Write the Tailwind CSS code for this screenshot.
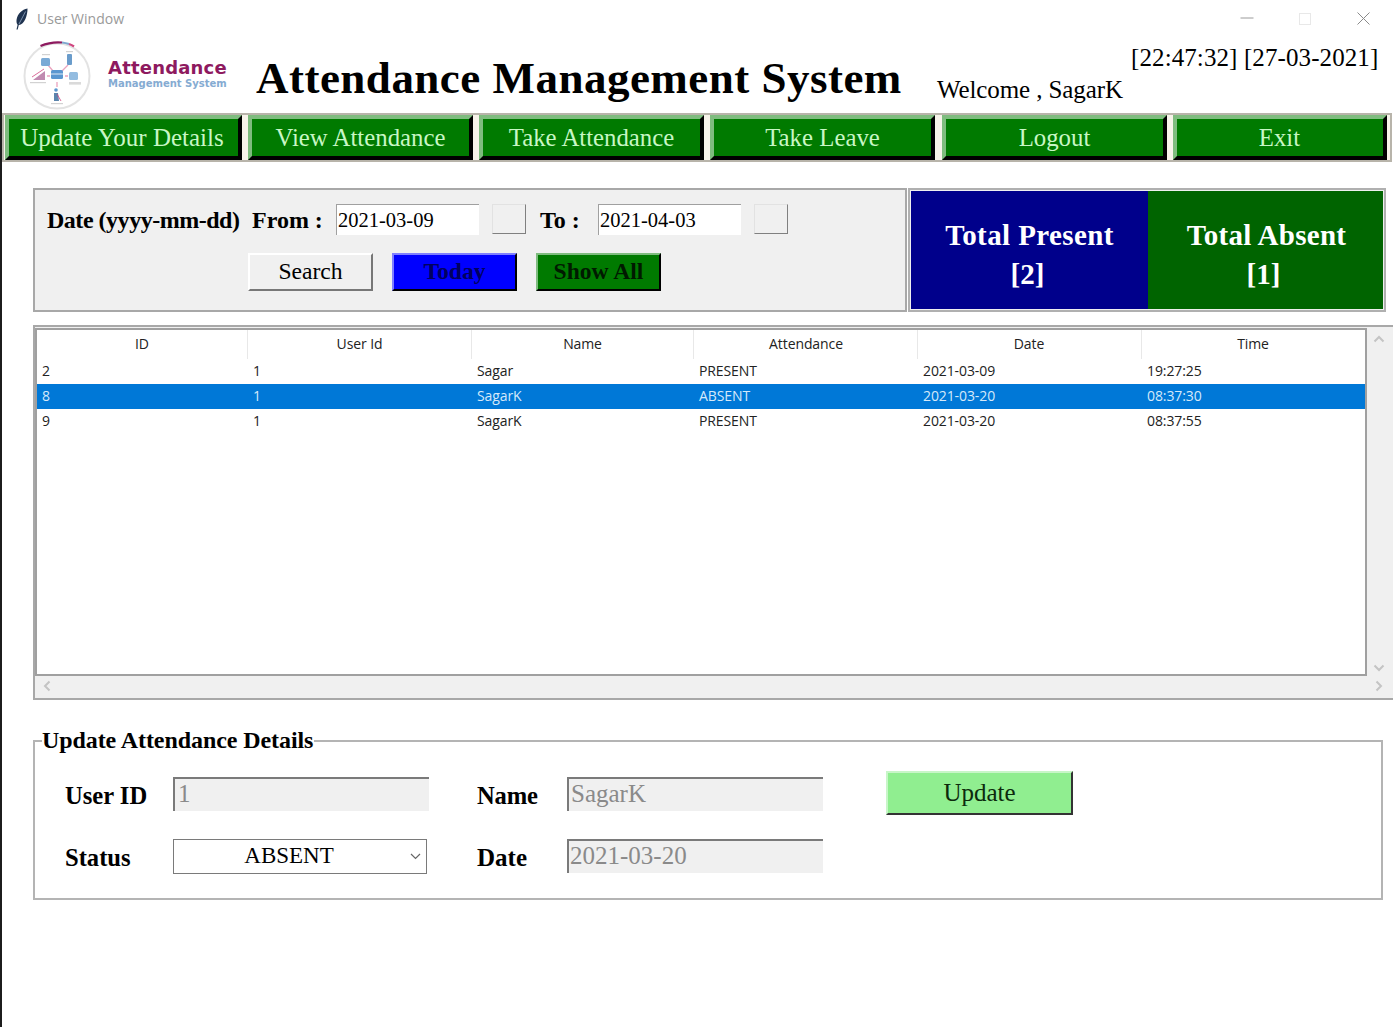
<!DOCTYPE html>
<html>
<head>
<meta charset="utf-8">
<script src="https://cdn.jsdelivr.net/npm/@tailwindcss/browser@4"></script>
<title>User Window</title>
</head>
<body class="bg-white">
<div class="w-[1393px] h-[1027px] overflow-hidden bg-white border-l-2 border-[#1c1c1c] font-['Liberation_Serif',serif] text-black">

  <!-- Title bar -->
  <div class="h-[38px] flex items-center pl-[13px] pb-[1px] font-['Open_Sans',sans-serif] text-[14px] text-[#9a9a9a]">
    <svg class="w-[14px] h-[22px] mr-[8px]" viewBox="0 0 14 22"><path d="M12.5 0.5C7 1.5 2.5 6 1.6 11.5C1.3 13.6 1.6 15.6 2.6 16.8L1.5 21.5L2.7 21.6L3.8 17C6.5 16.8 9 14.4 10.4 11C11.8 7.6 12.6 3.8 12.5 0.5Z" fill="#1f3350"/><path d="M10.5 3.5L4 16" stroke="#8fa4c0" stroke-width="0.8" fill="none"/></svg>
    <span>User Window</span>
    <div class="ml-auto flex items-center">
      <svg class="w-[14px] h-[14px] mr-[45px] -mt-[1px]" viewBox="0 0 14 14"><path d="M0.5 7H13.5" stroke="#9a9a9a" stroke-width="1"/></svg>
      <svg class="w-[12px] h-[12px] mr-[46px]" viewBox="0 0 12 12"><rect x="0.5" y="0.5" width="11" height="11" fill="none" stroke="#e8e8e8"/></svg>
      <svg class="w-[13px] h-[13px] mr-[23px]" viewBox="0 0 13 13"><path d="M0.5 0.5L12.5 12.5M12.5 0.5L0.5 12.5" stroke="#8a8a8a" stroke-width="1"/></svg>
    </div>
  </div>

  <!-- Header -->
  <div class="h-[75px] flex">
    <svg class="w-[72px] h-[72px] ml-[19px] mt-[1px] shrink-0" viewBox="0 0 72 72">
      <circle cx="36" cy="37" r="32.5" fill="#fff" stroke="#e3e3e3" stroke-width="2"/>
      <path d="M19.5 7Q30 2.5 41 3.5" stroke="#8e1a5f" stroke-width="2.2" fill="none"/>
      <path d="M41 3.5Q45 4 48 5" stroke="#7fa8d0" stroke-width="2.2" fill="none"/>
      <path d="M48 5Q51 6 53 7.5" stroke="#d0457f" stroke-width="2.2" fill="none"/>
      <path d="M27 26L32 32M47 26L41 32M26 37H29M44 37H47M36 43V48" stroke="#eaa3be" stroke-width="1.3"/>
      <rect x="20" y="19" width="9" height="8" rx="1.5" fill="#7aaad6"/>
      <rect x="46" y="15" width="5" height="11" rx="1" fill="#6a9ccb"/>
      <rect x="30" y="31" width="12" height="9" rx="1.5" fill="#5a97d0"/>
      <path d="M30 35H42" stroke="#fff" stroke-width="0.8"/>
      <rect x="48" y="33" width="9" height="8" rx="1.5" fill="#93bce0"/>
      <path d="M12 41L24 32L24 41Z" fill="#c08ab0"/>
      <path d="M11 38L23 30" stroke="#d0457f" stroke-width="0.8"/>
      <circle cx="35" cy="51" r="1.8" fill="#5a97d0"/>
      <path d="M33 54H37L38 62H33Z" fill="#5a84ac"/>
      <path d="M36 55L40 62" stroke="#d0457f" stroke-width="0.8"/>
      <rect x="21" y="15" width="8" height="1.2" fill="#d2d2d2"/>
      <rect x="45" y="12" width="7" height="1.2" fill="#d2d2d2"/>
      <rect x="9" y="43" width="16" height="1.2" fill="#d2d2d2"/>
      <rect x="48" y="43" width="12" height="2.6" fill="#dadada"/>
      <rect x="30" y="64" width="12" height="1.2" fill="#d2d2d2"/>
    </svg>
    <div class="w-[125px] ml-[15px] shrink-0 pt-[20px] font-['DejaVu_Sans',sans-serif] font-bold">
      <div class="text-[18px] leading-[20px] tracking-[0.2px] text-[#8e1a5f]">Attendance</div>
      <div class="text-[10px] leading-[12px] text-[#85abd2]">Management System</div>
    </div>
    <div class="w-[676px] ml-[23px] shrink-0 pt-[10px] text-[45px] leading-[60px] tracking-[0.48px] font-bold whitespace-nowrap">Attendance Management System</div>
    <div class="w-[194px] ml-[5px] pt-[37px] text-[25px] leading-[30px] tracking-[-0.1px] whitespace-nowrap">Welcome , SagarK</div>
    <div class="pt-[5px] text-[25px] leading-[30px] tracking-[0.1px] whitespace-nowrap">[22:47:32] [27-03-2021]</div>
  </div>

  <!-- Nav -->
  <div class="h-[49px] w-[1390px] border-2 border-[#b8b4aa] bg-[#f7f3ea] flex items-stretch pl-[1px] gap-[6px] text-[24.8px] text-[#c8f7c5]">
    <div class="w-[237px] pr-[3px] text-[25px] flex items-center justify-center bg-[#007a00] border-[4px] border-t-[#7fbc7f] border-l-[#7fbc7f] border-r-black border-b-black">Update Your Details</div>
    <div class="w-[225px] flex items-center justify-center bg-[#007a00] border-[4px] border-t-[#7fbc7f] border-l-[#7fbc7f] border-r-black border-b-black">View Attendance</div>
    <div class="w-[225px] flex items-center justify-center bg-[#007a00] border-[4px] border-t-[#7fbc7f] border-l-[#7fbc7f] border-r-black border-b-black">Take Attendance</div>
    <div class="w-[225px] flex items-center justify-center bg-[#007a00] border-[4px] border-t-[#7fbc7f] border-l-[#7fbc7f] border-r-black border-b-black">Take Leave</div>
    <div class="w-[225px] ml-[1px] flex items-center justify-center bg-[#007a00] border-[4px] border-t-[#7fbc7f] border-l-[#7fbc7f] border-r-black border-b-black">Logout</div>
    <div class="w-[214px] pr-[1px] flex items-center justify-center bg-[#007a00] border-[4px] border-t-[#7fbc7f] border-l-[#7fbc7f] border-r-black border-b-black">Exit</div>
  </div>

  <!-- Filters and totals -->
  <div class="flex mt-[26px] ml-[31px] h-[124px]">
    <div class="w-[874px] bg-[#f0f0f0] border-2 border-[#a8a8a8] pl-[12px] pt-[14px]">
      <div class="flex items-start h-[31px]">
        <div class="w-[205px] pt-px text-[24px] leading-[31px] tracking-[-0.48px] font-bold whitespace-nowrap">Date (yyyy-mm-dd)</div>
        <div class="w-[84px] pt-px text-[24px] leading-[31px] font-bold whitespace-nowrap">From :</div>
        <div class="w-[143px] h-[31px] bg-white border-t border-l border-[#a0a0a0] pl-[1px] pt-px text-[20.5px] leading-[29px]">2021-03-09</div>
        <div class="w-[34px] h-[30px] ml-[13px] bg-[#f0f0f0] border border-[#e2e2e2] border-r-[#808080] border-b-[#808080]"></div>
        <div class="w-[58px] ml-[14px] pt-px text-[24px] leading-[31px] font-bold whitespace-nowrap">To :</div>
        <div class="w-[143px] h-[31px] bg-white border-t border-l border-[#a0a0a0] pl-[1px] pt-px text-[20.5px] leading-[29px]">2021-04-03</div>
        <div class="w-[34px] h-[30px] ml-[13px] bg-[#f0f0f0] border border-[#e2e2e2] border-r-[#808080] border-b-[#808080]"></div>
      </div>
      <div class="flex mt-[18px] ml-[201px] gap-[19px] text-[23.6px]">
        <div class="w-[125px] h-[38px] pb-[1px] flex items-center justify-center bg-[#f0f0f0] border-2 border-t-white border-l-white border-r-[#777] border-b-[#777]">Search</div>
        <div class="w-[125px] h-[38px] pb-[1px] flex items-center justify-center font-bold text-[#000060] bg-[#0000ff] border-2 border-t-[#7f7fff] border-l-[#7f7fff] border-r-black border-b-black">Today</div>
        <div class="w-[125px] h-[38px] pb-[1px] flex items-center justify-center font-bold bg-[#007a00] border-2 border-t-[#7fbc7f] border-l-[#7fbc7f] border-r-black border-b-black text-[#001a00]">Show All</div>
      </div>
    </div>
    <div class="w-[478px] ml-[1px] border-2 border-[#b0b0b0] bg-[#f0f0f0] p-px flex text-white text-[29px] font-bold leading-[39px] text-center">
      <div class="w-[237px] bg-[#00008b] pt-[25px]">
        <div class="tracking-[0.4px]">Total Present</div>
        <div class="pr-[4px]">[2]</div>
      </div>
      <div class="w-[235px] bg-[#006400] pt-[25px]">
        <div class="pl-[2px] tracking-[0.3px]">Total Absent</div>
        <div class="pr-[4px]">[1]</div>
      </div>
    </div>
  </div>

  <!-- Table -->
  <div class="ml-[31px] mt-[13px] w-[1360px] h-[375px] bg-[#f0f0f0] border-2 border-r-0 border-[#a8a8a8] font-['Open_Sans',sans-serif] text-[14px] tracking-[-0.1px] text-[#222]">
    <div class="flex h-[348px]">
      <div class="w-[1332px] h-[348px] mt-px bg-white border-2 border-[#a0a0a0] overflow-hidden">
        <div class="grid grid-cols-[211px_224px_222px_224px_224px_223px] h-[29px] text-center leading-[28px]">
          <div class="border-r border-[#e8e8e8] h-[29px]">ID</div>
          <div class="border-r border-[#e8e8e8] h-[29px]">User Id</div>
          <div class="border-r border-[#e8e8e8] h-[29px]">Name</div>
          <div class="border-r border-[#e8e8e8] h-[29px] pl-[1px]">Attendance</div>
          <div class="border-r border-[#e8e8e8] h-[29px] pr-[1px]">Date</div>
          <div class="h-[29px] pr-[1px]">Time</div>
        </div>
        <div class="grid grid-cols-[211px_224px_222px_224px_224px_223px] h-[25px] leading-[23px] [&>div]:pl-[5px]">
          <div>2</div><div>1</div><div>Sagar</div><div>PRESENT</div><div>2021-03-09</div><div>19:27:25</div>
        </div>
        <div class="grid grid-cols-[211px_224px_222px_224px_224px_223px] h-[25px] leading-[23px] bg-[#0078d7] text-[#d5e9fa] [&>div]:pl-[5px]">
          <div>8</div><div>1</div><div>SagarK</div><div>ABSENT</div><div>2021-03-20</div><div>08:37:30</div>
        </div>
        <div class="grid grid-cols-[211px_224px_222px_224px_224px_223px] h-[25px] leading-[23px] [&>div]:pl-[5px]">
          <div>9</div><div>1</div><div>SagarK</div><div>PRESENT</div><div>2021-03-20</div><div>08:37:55</div>
        </div>
      </div>
      <div class="w-[24px] flex flex-col items-center justify-between pt-[8px] pb-[3px]">
        <svg class="w-[12px] h-[8px]" viewBox="0 0 12 8"><path d="M1.5 6.5L6 2L10.5 6.5" stroke="#c4c4c4" stroke-width="2" fill="none"/></svg>
        <svg class="w-[12px] h-[8px]" viewBox="0 0 12 8"><path d="M1.5 1.5L6 6L10.5 1.5" stroke="#c4c4c4" stroke-width="2" fill="none"/></svg>
      </div>
    </div>
    <div class="flex justify-between items-center h-[22px] pl-[8px] pr-[10px]">
      <svg class="w-[8px] h-[12px]" viewBox="0 0 8 12"><path d="M6.5 1.5L2 6L6.5 10.5" stroke="#c4c4c4" stroke-width="2" fill="none"/></svg>
      <svg class="w-[8px] h-[12px]" viewBox="0 0 8 12"><path d="M1.5 1.5L6 6L1.5 10.5" stroke="#c4c4c4" stroke-width="2" fill="none"/></svg>
    </div>
  </div>

  <!-- Update frame -->
  <div class="relative ml-[31px] mt-[40px] w-[1350px] h-[160px] border-2 border-[#b4b4b4]">
    <div class="absolute left-[7px] top-[-15px] bg-white pr-[1px] text-[24px] leading-[27px] tracking-[-0.08px] font-bold whitespace-nowrap">Update Attendance Details</div>
    <div class="flex flex-col pl-[30px] pt-[30px]">
      <div class="flex h-[44px]">
        <div class="w-[108px] pt-[7px] text-[24.6px] leading-[34px] font-bold">User ID</div>
        <div class="w-[256px] h-[34px] mt-[5px] bg-[#f0f0f0] border-t-2 border-l-2 border-[#7a7a7a] pl-[3px] text-[25px] leading-[30px] text-[#8a8a8a]">1</div>
        <div class="w-[90px] ml-[48px] pt-[7px] text-[24.6px] leading-[34px] font-bold tracking-[-0.2px]">Name</div>
        <div class="w-[256px] h-[34px] mt-[5px] bg-[#f0f0f0] border-t-2 border-l-2 border-[#7a7a7a] pl-[2px] text-[25px] leading-[30px] text-[#8a8a8a]">SagarK</div>
        <div class="w-[187px] h-[44px] ml-[63px] -mt-px flex items-center justify-center bg-[#90ee90] border-2 border-t-[#c8f6c8] border-l-[#c8f6c8] border-r-[#333] border-b-[#333] text-[25px] text-[#0c2a0c]">Update</div>
      </div>
      <div class="flex h-[36px] mt-[23px]">
        <div class="w-[108px] pt-[2px] text-[24.6px] leading-[34px] font-bold">Status</div>
        <div class="relative w-[254px] h-[35px] bg-white border border-[#7a7a7a] text-[23px] leading-[31px] text-center pr-[22px]">ABSENT
          <svg class="absolute right-[5px] top-[13px] w-[11px] h-[7px]" viewBox="0 0 11 7"><path d="M1 1L5.5 5.5L10 1" stroke="#666" stroke-width="1.2" fill="none"/></svg>
        </div>
        <div class="w-[90px] ml-[50px] pt-[2px] text-[25px] leading-[34px] font-bold">Date</div>
        <div class="w-[256px] h-[34px] bg-[#f0f0f0] border-t-2 border-l-2 border-[#7a7a7a] pl-[1px] text-[25px] leading-[30px] text-[#8a8a8a]">2021-03-20</div>
      </div>
    </div>
  </div>
</div>
</body>
</html>
